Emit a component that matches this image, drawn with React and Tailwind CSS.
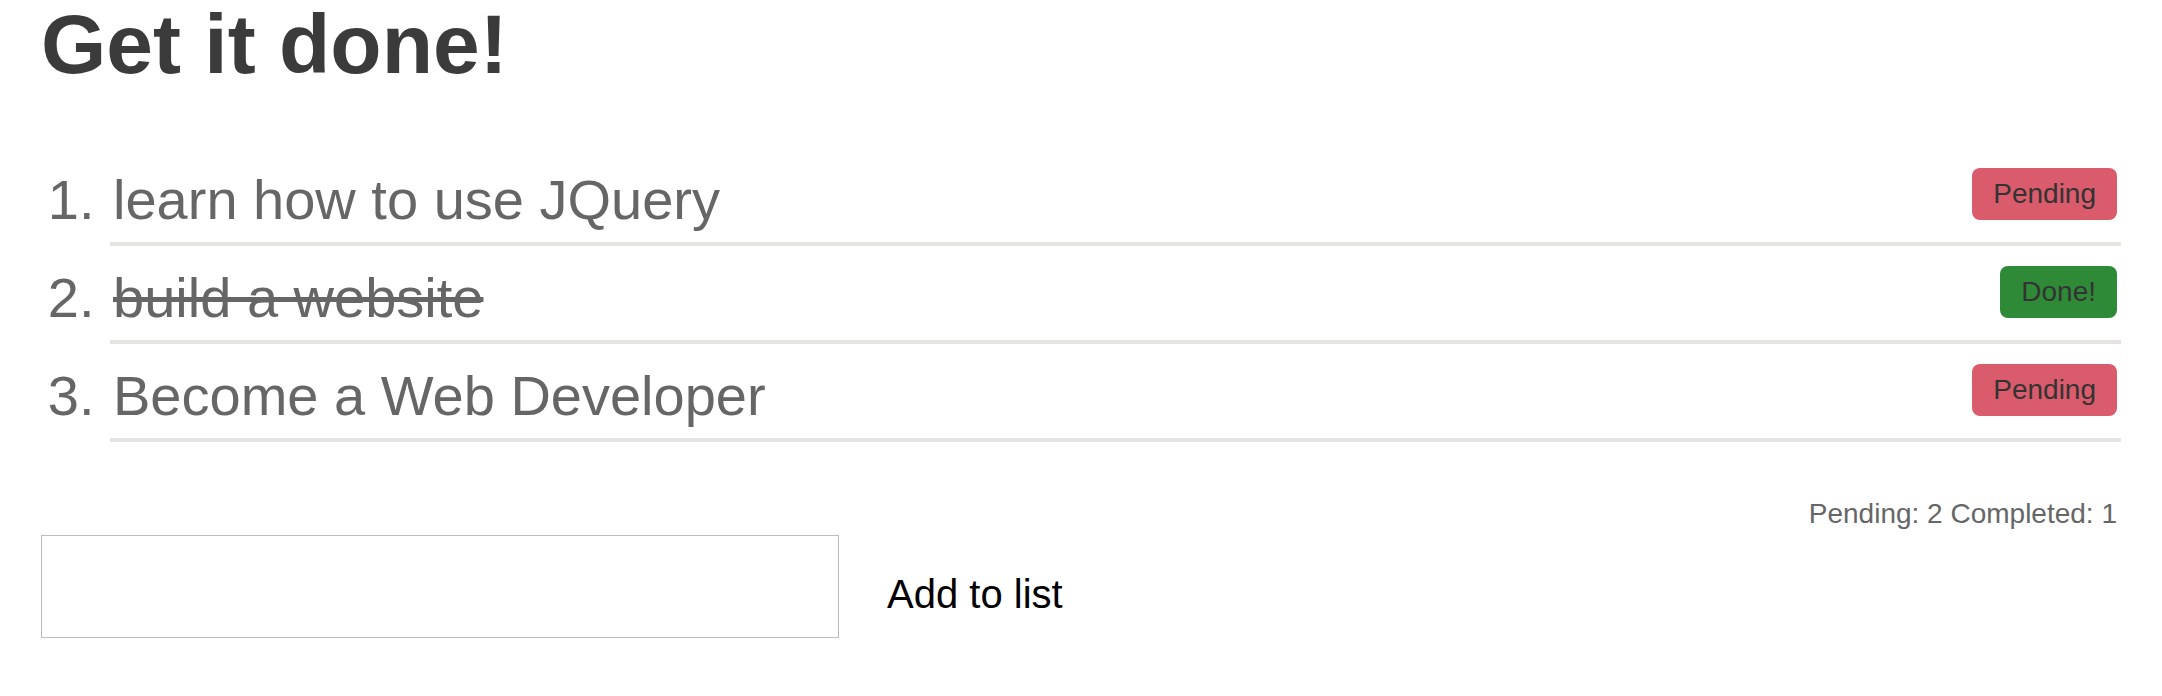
const todos = [
  { text: 'learn how to use JQuery', done: false },
  { text: 'build a website', done: true },
  { text: 'Become a Web Developer', done: false },
]

const StatusBadge = ({ done }) =>
  done ? (
    <span className="float-right mr-1 rounded-lg bg-[#2f8a37] px-[21px] py-2.5 text-[28px] leading-[32px] text-[#333333]">
      Done!
    </span>
  ) : (
    <span className="float-right mr-1 rounded-lg bg-[#d95b6c] px-[21px] py-2.5 text-[28px] leading-[32px] text-[#333333]">
      Pending
    </span>
  )

export default function App() {
  const pending = todos.filter((t) => !t.done).length
  const completed = todos.length - pending

  return (
    <div className="min-h-[696px] bg-white px-[41px] pt-[4px] font-['Liberation_Sans',Arial,sans-serif] text-[#666666]">
      <h1 className="m-0 text-[84px] font-bold leading-[80px] text-[#3b3b3b]">Get it done!</h1>

      <ol className="mt-16 list-decimal pl-[69px] text-[56px] leading-[64px]">
        {todos.map((todo, i) => (
          <li key={i} className="border-b-4 border-[#e6e3e0] pt-5 pb-2.5">
            <StatusBadge done={todo.done} />
            <span className={todo.done ? 'pl-[3px] line-through' : 'pl-[3px]'}>{todo.text}</span>
          </li>
        ))}
      </ol>

      <p className="mt-[56px] mb-[6px] mr-1 text-right text-[28px] leading-[31px]">
        Pending: {pending} Completed: {completed}
      </p>

      <div className="flex items-start">
        <input type="text" className="h-[103px] w-[798px] border border-[#bdbdbd] bg-white px-3 text-[32px] outline-none" />
        <button className="ml-12 mt-9 bg-transparent p-0 text-[40px] leading-[46px] text-black">Add to list</button>
      </div>
    </div>
  )
}
